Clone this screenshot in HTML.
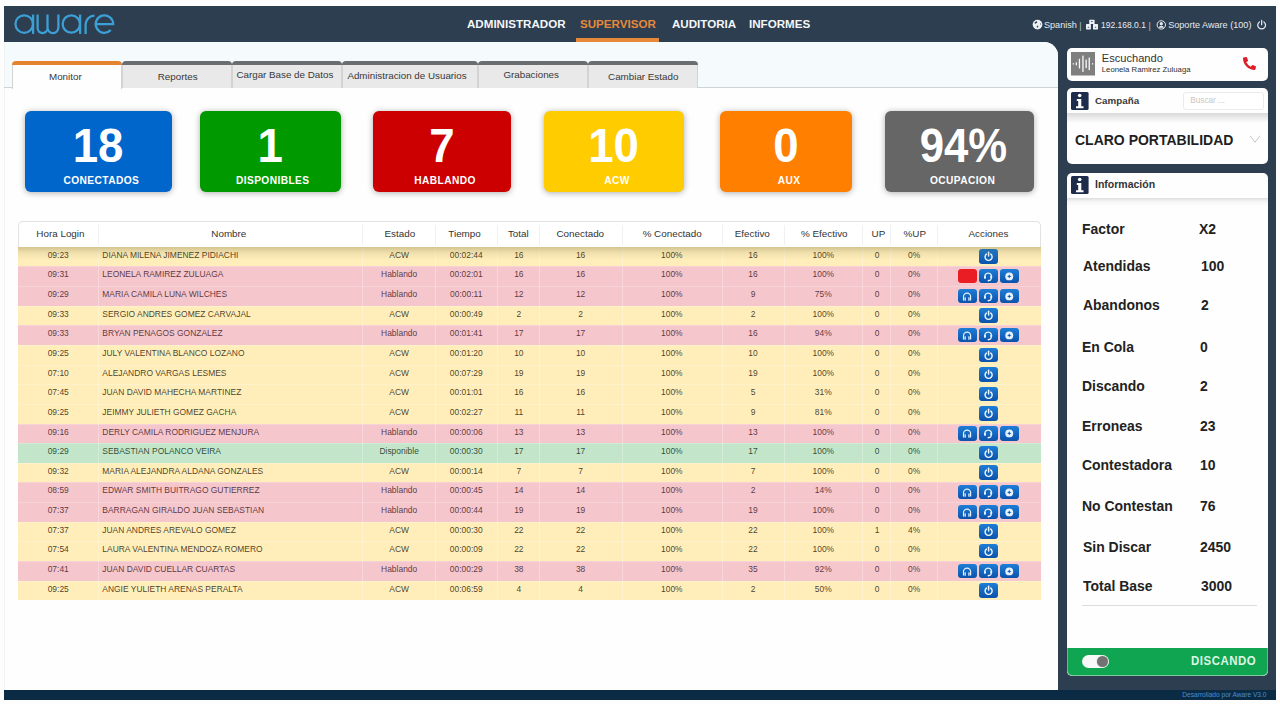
<!DOCTYPE html>
<html><head><meta charset="utf-8">
<style>
*{box-sizing:border-box;margin:0;padding:0}
html,body{width:1280px;height:704px;overflow:hidden;background:#fdfdfd;font-family:"Liberation Sans",sans-serif}
.abs{position:absolute}
#hdr{position:absolute;left:4px;top:6px;width:1272px;height:36px;background:#2d3e50}
#nav a{position:absolute;top:10.5px;font-size:11.6px;font-weight:bold;color:#f4f6f8;text-decoration:none;white-space:nowrap;line-height:14px}
#nav a.on{color:#e8893a}
#navline{position:absolute;left:572px;top:32px;width:83px;height:4px;background:#e8893a}
#hinfo{position:absolute;top:15px;left:1028px;font-size:9px;color:#e3e8ee;white-space:nowrap;line-height:10px}
#main{position:absolute;left:4px;top:42px;width:1054px;height:648px;background:#fefefe;border-top-right-radius:14px;overflow:hidden}
#mtop{position:absolute;left:0;top:0;width:1054px;height:45px;background:#f5fafd}
#tabline{position:absolute;left:0;top:45px;width:1054px;height:1px;background:#ccd3d9}
#leftline{position:absolute;left:0;top:0;width:1px;height:648px;background:#f1f2f4}
.tab{position:absolute;top:19px;height:27px;background:#e9e9e9;border-left:1px solid #d3d3d3;border-right:1px solid #d3d3d3;border-top-left-radius:5px;border-top-right-radius:5px;font-size:9.8px;color:#333;text-align:center;line-height:22px;padding-top:4px;white-space:nowrap}
.tab:before{content:"";position:absolute;left:-1px;right:-1px;top:0;height:4px;background:#6b6e71;border-top-left-radius:5px;border-top-right-radius:5px}
.tab.on{background:#fefefe;height:28px}
.tab.on:before{background:#e58430}
.card{position:absolute;top:68.6px;height:81px;border-radius:6px;box-shadow:0 1px 6px rgba(0,0,0,.32);color:#fff;text-align:center}
.card .n{position:absolute;left:0;right:0;top:13px;font-size:48px;font-weight:bold;line-height:44px;transform:scaleX(.95)}
.card .l{position:absolute;left:5.8px;right:0;top:63.1px;font-size:11.2px;font-weight:bold;line-height:12px;letter-spacing:.45px;transform:scaleX(.91)}
#tbl{position:absolute;left:13.5px;top:179px;width:1023.8px;height:380px}
#th{position:absolute;left:0;top:0;width:1023.8px;height:25.8px;background:#fff;border:1px solid #e2e2e2;border-bottom:none;border-top-left-radius:5px;border-top-right-radius:5px}
.thc{position:absolute;top:7.2px;line-height:1;font-size:9.85px;color:#333;text-align:center;white-space:nowrap}
.thd{position:absolute;top:3px;width:1px;height:20px;background:#f1f1f1}
.tr{position:absolute;left:0;width:1023.8px;height:19.64px}
.tr+.tr:before{content:"";position:absolute;left:0;top:0;width:100%;height:1px;background:rgba(255,255,255,.22)}
.tr div{position:absolute;top:0;height:19.66px;line-height:16.8px;font-size:9.6px;text-align:center;white-space:nowrap;color:rgba(25,15,0,.8);transform:scaleX(.88)}
.tr .c1{text-align:left;padding-left:4.9px;transform-origin:left}
.tr.y{background:#ffeeba}
.tr.k{background:#f5c6cb}
.tr.k div{color:rgba(40,5,15,.76)}
.tr.g{background:#c3e6cb}
.tr.g div{color:rgba(0,25,10,.78)}
.tr .c11{transform:none;font-size:0;padding-left:0;text-align:center;line-height:0}
.vd{position:absolute;top:25.8px;width:1px;height:353.5px;background:rgba(255,255,255,.28)}
.ish{position:absolute;left:0;top:25.8px;width:1023.8px;height:13px;background:linear-gradient(rgba(70,60,10,.24),rgba(70,60,10,.08) 45%,rgba(70,60,10,0))}
.b{display:inline-block;width:19px;height:14.5px;border-radius:3px;background:linear-gradient(#1d7ed6,#0c52ab);vertical-align:top;margin-top:2.5px;position:relative;left:-0.6px;box-shadow:0 0 1px rgba(255,255,255,.8)}
.b+.b{margin-left:2.3px}
.b.rd{background:#ea1c24}
.b svg{position:absolute;left:0;top:0;width:19px;height:14.5px}
#side{position:absolute;left:1058px;top:42px;width:218px;height:648px;background:#2d3e50}
#foot{position:absolute;left:4px;top:690px;width:1272px;height:10px;background:#0b2b45}
#foot span{position:absolute;right:9.5px;top:-0.5px;font-size:6.6px;line-height:9px;color:#4a8ed0}
.t{position:absolute;line-height:1;white-space:nowrap}
.sc2{position:absolute;background:#fefefe;border-radius:5px}
.sc{position:absolute;left:9px;width:201px;background:#fefefe;border-radius:6px}
.ico{position:absolute;background:#2d3e50}
.lbl{position:absolute;left:16px;font-size:14px;font-weight:bold;color:#222;line-height:14px;white-space:nowrap}
.val{position:absolute;left:133px;font-size:14px;font-weight:bold;color:#222;line-height:14px;white-space:nowrap}
.c0{left:0.0px;width:80.5px}
.c1{left:80.5px;width:264.7px}
.c2{left:345.2px;width:72.3px}
.c3{left:417.5px;width:62.5px}
.c4{left:480.0px;width:41.7px}
.c5{left:521.7px;width:83.2px}
.c6{left:604.9px;width:99.6px}
.c7{left:704.5px;width:62.0px}
.c8{left:766.5px;width:78.6px}
.c9{left:845.1px;width:28.1px}
.c10{left:873.2px;width:46.3px}
.c11{left:919.5px;width:104.3px}
</style></head><body>
<svg width="0" height="0" style="position:absolute"><defs>
<symbol id="pw" viewBox="0 0 19 14.5"><path d="M7.45 5.1 A3.5 3.5 0 1 0 11.75 5.1" fill="none" stroke="#eef6ff" stroke-width="1.45" stroke-linecap="round"/><line x1="9.6" y1="3.3" x2="9.6" y2="7.1" stroke="#eef6ff" stroke-width="1.45" stroke-linecap="round"/></symbol>
<symbol id="hs" viewBox="0 0 19 14.5"><path d="M6.2 9.2 A3.4 3.4 0 1 1 12.1 9.2" fill="none" stroke="#e6f3ff" stroke-width="1.35"/><rect x="5.2" y="6.9" width="1.7" height="2.9" rx=".6" fill="#e6f3ff"/><rect x="11.3" y="6.9" width="1.7" height="2.9" rx=".6" fill="#e6f3ff"/><path d="M12.2 9.6 Q12.2 11.6 9.6 11.6" fill="none" stroke="#e6f3ff" stroke-width="1.1"/><circle cx="9.4" cy="11.6" r=".85" fill="#e6f3ff"/></symbol>
<symbol id="hp" viewBox="0 0 19 14.5"><path d="M5.5 11.6 V7.6 A3.55 3.55 0 0 1 12.6 7.6 V11.6" fill="none" stroke="#e6f3ff" stroke-width="1.15"/><rect x="6.5" y="8.3" width="1.3" height="3.5" rx=".5" fill="#e6f3ff"/><rect x="10.3" y="8.3" width="1.3" height="3.5" rx=".5" fill="#e6f3ff"/></symbol>
<symbol id="pl" viewBox="0 0 19 14.5"><circle cx="9.25" cy="7.4" r="3.95" fill="#e6f3ff"/><path d="M9.25 5.2 L9.9 6.75 L11.45 7.4 L9.9 8.05 L9.25 9.6 L8.6 8.05 L7.05 7.4 L8.6 6.75Z" fill="#0d56ad"/></symbol>
</defs></svg>
<div id="hdr">
  <svg class="abs" style="left:0;top:0" width="120" height="36" viewBox="4 6 120 36">
   <g fill="none" stroke="#3ca0d6" stroke-width="2.25" stroke-linecap="butt">
    <circle cx="24.2" cy="24" r="8.75"/><line x1="33.1" y1="14.6" x2="33.1" y2="33.9"/>
    <path d="M37.6 14.6 V28.1 a4.95 4.95 0 0 0 9.9 0 V14.6 M47.5 27.6 a5.45 5.45 0 0 0 10.9 0 V14.6"/>
    <circle cx="71.3" cy="24" r="8.65"/><line x1="80.1" y1="14.6" x2="80.1" y2="33.9"/>
    <path d="M85.6 33.9 V24 a8.8 8.8 0 0 1 8.9 -8.3"/>
    <path d="M95.8 24 H113.2 a8.75 8.75 0 1 0 -2.4 6.1"/>
   </g>
  </svg>
  <div id="nav">
   <a style="left:463px">ADMINISTRADOR</a>
   <a class="on" style="left:576px">SUPERVISOR</a>
   <a style="left:668px">AUDITORIA</a>
   <a style="left:745px">INFORMES</a>
  </div>
  <div id="navline"></div>

</div>
<div class="abs" style="left:1030px;top:40px;width:30px;height:30px;background:#2d3e50"></div>
<div id="main">
  <div id="mtop"></div>
  <div id="leftline"></div>
  <div id="tabline"></div>
  <div class="tab on" style="left:8px;width:110px"></div>
  <div class="tab" style="left:118px;width:110px"></div>
  <div class="tab" style="left:228px;width:110px"></div>
  <div class="tab" style="left:338px;width:136px"></div>
  <div class="tab" style="left:474px;width:110px"></div>
  <div class="tab" style="left:584px;width:110px"></div>

  <div class="card" style="left:21.3px;width:146.5px;background:#0066cc"><div class="n" style="left:-1.7px">18</div><div class="l">CONECTADOS</div></div>
  <div class="card" style="left:195.6px;width:141.2px;background:#009900"><div class="n" style="left:-1px">1</div><div class="l">DISPONIBLES</div></div>
  <div class="card" style="left:369px;width:138px;background:#cc0000"><div class="n">7</div><div class="l">HABLANDO</div></div>
  <div class="card" style="left:540px;width:140px;background:#ffcc00"><div class="n" style="left:-1px">10</div><div class="l">ACW</div></div>
  <div class="card" style="left:716px;width:132px;background:#ff8000"><div class="n">0</div><div class="l">AUX</div></div>
  <div class="card" style="left:881px;width:149px;background:#666666"><div class="n" style="left:8.3px;transform:scaleX(.91)">94%</div><div class="l">OCUPACION</div></div>

  <div id="tbl">
   <div id="th">
<div class="thc" style="left:1.70px;width:80.50px">Hora Login</div>
<div class="thc" style="left:78.00px;width:264.70px">Nombre</div>
<div class="thd" style="left:79.00px"></div>
<div class="thc" style="left:345.20px;width:72.30px">Estado</div>
<div class="thd" style="left:343.70px"></div>
<div class="thc" style="left:414.80px;width:62.50px">Tiempo</div>
<div class="thd" style="left:416.00px"></div>
<div class="thc" style="left:479.00px;width:41.70px">Total</div>
<div class="thd" style="left:478.50px"></div>
<div class="thc" style="left:520.20px;width:83.20px">Conectado</div>
<div class="thd" style="left:520.20px"></div>
<div class="thc" style="left:603.90px;width:99.60px">% Conectado</div>
<div class="thd" style="left:603.40px"></div>
<div class="thc" style="left:702.80px;width:62.00px">Efectivo</div>
<div class="thd" style="left:703.00px"></div>
<div class="thc" style="left:766.50px;width:78.60px">% Efectivo</div>
<div class="thd" style="left:765.00px"></div>
<div class="thc" style="left:845.90px;width:28.10px">UP</div>
<div class="thd" style="left:843.60px"></div>
<div class="thc" style="left:873.20px;width:46.30px">%UP</div>
<div class="thd" style="left:871.70px"></div>
<div class="thc" style="left:917.80px;width:104.30px">Acciones</div>
<div class="thd" style="left:918.00px"></div>
</div>
   <div class="tr y" style="top:25.80px"><div class="c0">09:23</div><div class="c1">DIANA MILENA JIMENEZ PIDIACHI</div><div class="c2">ACW</div><div class="c3">00:02:44</div><div class="c4">16</div><div class="c5">16</div><div class="c6">100%</div><div class="c7">16</div><div class="c8">100%</div><div class="c9">0</div><div class="c10">0%</div><div class="c11"><i class="b"><svg><use href="#pw"/></svg></i></div></div>
<div class="tr k" style="top:45.44px"><div class="c0">09:31</div><div class="c1">LEONELA RAMIREZ ZULUAGA</div><div class="c2">Hablando</div><div class="c3">00:02:01</div><div class="c4">16</div><div class="c5">16</div><div class="c6">100%</div><div class="c7">16</div><div class="c8">100%</div><div class="c9">0</div><div class="c10">0%</div><div class="c11"><i class="b rd"></i><i class="b"><svg><use href="#hs"/></svg></i><i class="b"><svg><use href="#pl"/></svg></i></div></div>
<div class="tr k" style="top:65.08px"><div class="c0">09:29</div><div class="c1">MARIA CAMILA LUNA WILCHES</div><div class="c2">Hablando</div><div class="c3">00:00:11</div><div class="c4">12</div><div class="c5">12</div><div class="c6">100%</div><div class="c7">9</div><div class="c8">75%</div><div class="c9">0</div><div class="c10">0%</div><div class="c11"><i class="b"><svg><use href="#hp"/></svg></i><i class="b"><svg><use href="#hs"/></svg></i><i class="b"><svg><use href="#pl"/></svg></i></div></div>
<div class="tr y" style="top:84.72px"><div class="c0">09:33</div><div class="c1">SERGIO ANDRES GOMEZ CARVAJAL</div><div class="c2">ACW</div><div class="c3">00:00:49</div><div class="c4">2</div><div class="c5">2</div><div class="c6">100%</div><div class="c7">2</div><div class="c8">100%</div><div class="c9">0</div><div class="c10">0%</div><div class="c11"><i class="b"><svg><use href="#pw"/></svg></i></div></div>
<div class="tr k" style="top:104.36px"><div class="c0">09:33</div><div class="c1">BRYAN PENAGOS GONZALEZ</div><div class="c2">Hablando</div><div class="c3">00:01:41</div><div class="c4">17</div><div class="c5">17</div><div class="c6">100%</div><div class="c7">16</div><div class="c8">94%</div><div class="c9">0</div><div class="c10">0%</div><div class="c11"><i class="b"><svg><use href="#hp"/></svg></i><i class="b"><svg><use href="#hs"/></svg></i><i class="b"><svg><use href="#pl"/></svg></i></div></div>
<div class="tr y" style="top:124.00px"><div class="c0">09:25</div><div class="c1">JULY VALENTINA BLANCO LOZANO</div><div class="c2">ACW</div><div class="c3">00:01:20</div><div class="c4">10</div><div class="c5">10</div><div class="c6">100%</div><div class="c7">10</div><div class="c8">100%</div><div class="c9">0</div><div class="c10">0%</div><div class="c11"><i class="b"><svg><use href="#pw"/></svg></i></div></div>
<div class="tr y" style="top:143.64px"><div class="c0">07:10</div><div class="c1">ALEJANDRO VARGAS LESMES</div><div class="c2">ACW</div><div class="c3">00:07:29</div><div class="c4">19</div><div class="c5">19</div><div class="c6">100%</div><div class="c7">19</div><div class="c8">100%</div><div class="c9">0</div><div class="c10">0%</div><div class="c11"><i class="b"><svg><use href="#pw"/></svg></i></div></div>
<div class="tr y" style="top:163.28px"><div class="c0">07:45</div><div class="c1">JUAN DAVID MAHECHA MARTINEZ</div><div class="c2">ACW</div><div class="c3">00:01:01</div><div class="c4">16</div><div class="c5">16</div><div class="c6">100%</div><div class="c7">5</div><div class="c8">31%</div><div class="c9">0</div><div class="c10">0%</div><div class="c11"><i class="b"><svg><use href="#pw"/></svg></i></div></div>
<div class="tr y" style="top:182.92px"><div class="c0">09:25</div><div class="c1">JEIMMY JULIETH GOMEZ GACHA</div><div class="c2">ACW</div><div class="c3">00:02:27</div><div class="c4">11</div><div class="c5">11</div><div class="c6">100%</div><div class="c7">9</div><div class="c8">81%</div><div class="c9">0</div><div class="c10">0%</div><div class="c11"><i class="b"><svg><use href="#pw"/></svg></i></div></div>
<div class="tr k" style="top:202.56px"><div class="c0">09:16</div><div class="c1">DERLY CAMILA RODRIGUEZ MENJURA</div><div class="c2">Hablando</div><div class="c3">00:00:06</div><div class="c4">13</div><div class="c5">13</div><div class="c6">100%</div><div class="c7">13</div><div class="c8">100%</div><div class="c9">0</div><div class="c10">0%</div><div class="c11"><i class="b"><svg><use href="#hp"/></svg></i><i class="b"><svg><use href="#hs"/></svg></i><i class="b"><svg><use href="#pl"/></svg></i></div></div>
<div class="tr g" style="top:222.20px"><div class="c0">09:29</div><div class="c1">SEBASTIAN POLANCO VEIRA</div><div class="c2">Disponible</div><div class="c3">00:00:30</div><div class="c4">17</div><div class="c5">17</div><div class="c6">100%</div><div class="c7">17</div><div class="c8">100%</div><div class="c9">0</div><div class="c10">0%</div><div class="c11"><i class="b"><svg><use href="#pw"/></svg></i></div></div>
<div class="tr y" style="top:241.84px"><div class="c0">09:32</div><div class="c1">MARIA ALEJANDRA ALDANA GONZALES</div><div class="c2">ACW</div><div class="c3">00:00:14</div><div class="c4">7</div><div class="c5">7</div><div class="c6">100%</div><div class="c7">7</div><div class="c8">100%</div><div class="c9">0</div><div class="c10">0%</div><div class="c11"><i class="b"><svg><use href="#pw"/></svg></i></div></div>
<div class="tr k" style="top:261.48px"><div class="c0">08:59</div><div class="c1">EDWAR SMITH BUITRAGO GUTIERREZ</div><div class="c2">Hablando</div><div class="c3">00:00:45</div><div class="c4">14</div><div class="c5">14</div><div class="c6">100%</div><div class="c7">2</div><div class="c8">14%</div><div class="c9">0</div><div class="c10">0%</div><div class="c11"><i class="b"><svg><use href="#hp"/></svg></i><i class="b"><svg><use href="#hs"/></svg></i><i class="b"><svg><use href="#pl"/></svg></i></div></div>
<div class="tr k" style="top:281.12px"><div class="c0">07:37</div><div class="c1">BARRAGAN GIRALDO JUAN SEBASTIAN</div><div class="c2">Hablando</div><div class="c3">00:00:44</div><div class="c4">19</div><div class="c5">19</div><div class="c6">100%</div><div class="c7">19</div><div class="c8">100%</div><div class="c9">0</div><div class="c10">0%</div><div class="c11"><i class="b"><svg><use href="#hp"/></svg></i><i class="b"><svg><use href="#hs"/></svg></i><i class="b"><svg><use href="#pl"/></svg></i></div></div>
<div class="tr y" style="top:300.76px"><div class="c0">07:37</div><div class="c1">JUAN ANDRES AREVALO GOMEZ</div><div class="c2">ACW</div><div class="c3">00:00:30</div><div class="c4">22</div><div class="c5">22</div><div class="c6">100%</div><div class="c7">22</div><div class="c8">100%</div><div class="c9">1</div><div class="c10">4%</div><div class="c11"><i class="b"><svg><use href="#pw"/></svg></i></div></div>
<div class="tr y" style="top:320.40px"><div class="c0">07:54</div><div class="c1">LAURA VALENTINA MENDOZA ROMERO</div><div class="c2">ACW</div><div class="c3">00:00:09</div><div class="c4">22</div><div class="c5">22</div><div class="c6">100%</div><div class="c7">22</div><div class="c8">100%</div><div class="c9">0</div><div class="c10">0%</div><div class="c11"><i class="b"><svg><use href="#pw"/></svg></i></div></div>
<div class="tr k" style="top:340.04px"><div class="c0">07:41</div><div class="c1">JUAN DAVID CUELLAR CUARTAS</div><div class="c2">Hablando</div><div class="c3">00:00:29</div><div class="c4">38</div><div class="c5">38</div><div class="c6">100%</div><div class="c7">35</div><div class="c8">92%</div><div class="c9">0</div><div class="c10">0%</div><div class="c11"><i class="b"><svg><use href="#hp"/></svg></i><i class="b"><svg><use href="#hs"/></svg></i><i class="b"><svg><use href="#pl"/></svg></i></div></div>
<div class="tr y" style="top:359.68px"><div class="c0">09:25</div><div class="c1">ANGIE YULIETH ARENAS PERALTA</div><div class="c2">ACW</div><div class="c3">00:06:59</div><div class="c4">4</div><div class="c5">4</div><div class="c6">100%</div><div class="c7">2</div><div class="c8">50%</div><div class="c9">0</div><div class="c10">0%</div><div class="c11"><i class="b"><svg><use href="#pw"/></svg></i></div></div>
<div class="vd" style="left:80.00px"></div>
<div class="vd" style="left:344.70px"></div>
<div class="vd" style="left:417.00px"></div>
<div class="vd" style="left:479.50px"></div>
<div class="vd" style="left:521.20px"></div>
<div class="vd" style="left:604.40px"></div>
<div class="vd" style="left:704.00px"></div>
<div class="vd" style="left:766.00px"></div>
<div class="vd" style="left:844.60px"></div>
<div class="vd" style="left:872.70px"></div>
<div class="vd" style="left:919.00px"></div>
<div class="ish"></div>
  </div>
</div>
<div id="side"></div>
<div class="t" style="left:49px;top:71.50px;font-size:9.8px;color:#383838">Monitor</div>
<div class="t" style="left:157.8px;top:71.70px;font-size:9.8px;color:#383838">Reportes</div>
<div class="t" style="left:236.4px;top:70.45px;font-size:9.8px;color:#383838">Cargar Base de Datos</div>
<div class="t" style="left:347.4px;top:71.40px;font-size:9.8px;color:#383838">Administracion de Usuarios</div>
<div class="t" style="left:503.4px;top:70.40px;font-size:9.8px;color:#383838">Grabaciones</div>
<div class="t" style="left:608.1px;top:71.60px;font-size:9.8px;color:#383838">Cambiar Estado</div>
<svg class="abs" style="left:1032px;top:19px" width="12" height="12" viewBox="0 0 12 12"><circle cx="5.5" cy="5.6" r="4.85" fill="#eef2f6"/><ellipse cx="3.9" cy="3.5" rx="1.5" ry="0.9" transform="rotate(-30 3.9 3.5)" fill="#2d3e50"/><ellipse cx="8.5" cy="5" rx=".6" ry="1" fill="#8a96a3"/><ellipse cx="5.5" cy="7.6" rx=".8" ry="1.1" fill="#3a4a5c"/></svg>
<div class="t" style="left:1044px;top:21.2px;font-size:9.1px;color:#e6ebf0">Spanish</div>
<div class="t" style="left:1079.2px;top:21.5px;font-size:9px;color:#b8c2cc">|</div>
<svg class="abs" style="left:1085px;top:19px" width="14" height="12" viewBox="0 0 14 12"><g fill="#eef2f6"><rect x="4.2" y="0.8" width="5.4" height="4.2" rx=".6"/><rect x="1" y="5" width="4.9" height="5.4" rx=".6"/><rect x="8" y="5" width="5" height="5.4" rx=".6"/></g><g fill="#4a5766"><rect x="5.8" y="2" width="2" height=".9" rx=".4"/><rect x="2.7" y="7.8" width="1.5" height="1" rx=".4"/><rect x="9.8" y="7.8" width="1.5" height="1" rx=".4"/></g></svg>
<div class="t" style="left:1101px;top:21.2px;font-size:9.1px;color:#e6ebf0;transform:scaleX(.935);transform-origin:left">192.168.0.1</div>
<div class="t" style="left:1148.5px;top:21.5px;font-size:9px;color:#b8c2cc">|</div>
<svg class="abs" style="left:1155.5px;top:20px" width="11" height="10" viewBox="0 0 11 10"><circle cx="5.3" cy="4.9" r="4.2" fill="none" stroke="#e8edf2" stroke-width="1"/><circle cx="5.3" cy="3.7" r="1.6" fill="#e8edf2"/><path d="M2.6 7.8 q.6-2 2.7-2 q2.1 0 2.7 2" fill="#e8edf2"/></svg>
<div class="t" style="left:1168.2px;top:21.2px;font-size:9.1px;color:#e6ebf0">Soporte Aware (100)</div>
<svg class="abs" style="left:1256px;top:19px" width="12" height="12" viewBox="0 0 12 12"><path d="M3.4 2.9 A3.9 3.9 0 1 0 7.9 2.9" fill="none" stroke="#e3e9ef" stroke-width="1.25" stroke-linecap="round"/><line x1="5.65" y1="1.4" x2="5.65" y2="5.8" stroke="#e3e9ef" stroke-width="1.25" stroke-linecap="round"/></svg>
<div class="sc2" style="left:1067px;top:48.3px;width:201px;height:32.5px"></div>
<svg class="abs" style="left:1071.4px;top:52.4px" width="24" height="24" viewBox="0 0 24 24"><rect width="24" height="23.5" fill="#7f7f7f"/><g fill="#fafafa"><rect x="1.7" y="11.2" width="1.2" height="1.3"/><rect x="4.7" y="10.4" width="1.3" height="2.9"/><rect x="7.8" y="6.8" width="1.3" height="9.6"/><rect x="11.3" y="3.6" width="1.3" height="16.3"/><rect x="14.5" y="7.6" width="1.3" height="8.5"/><rect x="17.6" y="5.6" width="1.3" height="12.5"/><rect x="21" y="11.2" width="1.2" height="1.3"/></g></svg>
<div class="t" style="left:1101.8px;top:52.60px;font-size:11.1px;color:#333">Escuchando</div>
<div class="t" style="left:1101.8px;top:65.74px;font-size:7.75px;color:#2f2f2f">Leonela Ramirez Zuluaga</div>
<svg class="abs" style="left:1242.5px;top:57px" width="13" height="13" viewBox="0 0 512 512"><path d="M497.39 361.8l-112-48a24 24 0 0 0-28 6.9l-49.6 60.6A370.66 370.66 0 0 1 130.6 204.11l60.6-49.6a23.94 23.94 0 0 0 6.9-28l-48-112A24.16 24.16 0 0 0 122.6.61l-104 24A24 24 0 0 0 0 48c0 256.5 207.9 464 464 464a24 24 0 0 0 23.4-18.6l24-104a24.290 24.290 0 0 0-14.01-27.6z" fill="#dc1f2b"/></svg>
<div class="sc2" style="left:1067px;top:88.2px;width:201px;height:76.3px;overflow:hidden"><div style="position:absolute;left:0;top:25.3px;width:201px;height:10px;background:linear-gradient(#d9d9d9,rgba(255,255,255,0))"></div></div>
<svg class="abs" style="left:1071.3px;top:91.9px" width="18" height="18" viewBox="0 0 18 18"><rect width="17.6" height="18" rx="1.5" fill="#1d2c4b"/><circle cx="8.7" cy="3.5" r="1.8" fill="#fff"/><path d="M5.8 7 H10.3 V14.3 H12.5 V16.3 H5 V14.3 H7.2 V8.9 H5.8Z" fill="#fff"/></svg>
<div class="t" style="left:1095px;top:96.45px;font-size:9.8px;color:#3a3a3a;font-weight:bold">Campaña</div>
<div class="abs" style="left:1182.6px;top:92.25px;width:81px;height:18px;border:1px solid #ebebeb;border-radius:3px;background:#fff"></div>
<div class="t" style="left:1190.3px;top:96.66px;font-size:8.2px;color:#c6c6c6">Buscar ...</div>
<div class="t" style="left:1075px;top:132.30px;font-size:15px;color:#1f1f1f;font-weight:bold;transform:scaleX(.933);transform-origin:left">CLARO PORTABILIDAD</div>
<svg class="abs" style="left:1249px;top:134px" width="12" height="10" viewBox="0 0 12 10"><path d="M1 1.8 L6 8.2 L11 1.8" fill="none" stroke="#c6c6c6" stroke-width="1"/></svg>
<div class="sc2" style="left:1067px;top:173px;width:201px;height:503px;overflow:hidden"><div style="position:absolute;left:0;top:25px;width:201px;height:8px;background:linear-gradient(rgba(0,0,0,.13),rgba(0,0,0,.04) 40%,rgba(0,0,0,0))"></div><div style="position:absolute;left:0;top:474.8px;width:201px;height:28.2px;background:#10a551;border-radius:0 0 5px 5px;box-shadow:inset 0 -1px 0 rgba(255,255,255,.45),inset 1px 0 0 rgba(255,255,255,.3),inset -1px 0 0 rgba(255,255,255,.3)"></div></div>
<svg class="abs" style="left:1071.3px;top:176.4px" width="18" height="18" viewBox="0 0 18 18"><rect width="17.6" height="18" rx="1.5" fill="#1d2c4b"/><circle cx="8.7" cy="3.5" r="1.8" fill="#fff"/><path d="M5.8 7 H10.3 V14.3 H12.5 V16.3 H5 V14.3 H7.2 V8.9 H5.8Z" fill="#fff"/></svg>
<div class="t" style="left:1095px;top:179.31px;font-size:10.5px;color:#333;font-weight:bold">Información</div>
<div class="t" style="left:1081.6px;top:221.30px;font-size:15px;color:#222;font-weight:bold;transform:scaleX(.93);transform-origin:left">Factor</div>
<div class="t" style="left:1199.3px;top:221.30px;font-size:15px;color:#222;font-weight:bold;transform:scaleX(.93);transform-origin:left">X2</div>
<div class="t" style="left:1083.3px;top:257.70px;font-size:15px;color:#222;font-weight:bold;transform:scaleX(.93);transform-origin:left">Atendidas</div>
<div class="t" style="left:1200.9px;top:257.70px;font-size:15px;color:#222;font-weight:bold;transform:scaleX(.93);transform-origin:left">100</div>
<div class="t" style="left:1083.3px;top:297.30px;font-size:15px;color:#222;font-weight:bold;transform:scaleX(.93);transform-origin:left">Abandonos</div>
<div class="t" style="left:1200.9px;top:297.30px;font-size:15px;color:#222;font-weight:bold;transform:scaleX(.93);transform-origin:left">2</div>
<div class="t" style="left:1081.6px;top:339.10px;font-size:15px;color:#222;font-weight:bold;transform:scaleX(.93);transform-origin:left">En Cola</div>
<div class="t" style="left:1199.7px;top:339.10px;font-size:15px;color:#222;font-weight:bold;transform:scaleX(.93);transform-origin:left">0</div>
<div class="t" style="left:1081.6px;top:378.30px;font-size:15px;color:#222;font-weight:bold;transform:scaleX(.93);transform-origin:left">Discando</div>
<div class="t" style="left:1200.2px;top:378.30px;font-size:15px;color:#222;font-weight:bold;transform:scaleX(.93);transform-origin:left">2</div>
<div class="t" style="left:1081.6px;top:418.30px;font-size:15px;color:#222;font-weight:bold;transform:scaleX(.93);transform-origin:left">Erroneas</div>
<div class="t" style="left:1199.7px;top:418.30px;font-size:15px;color:#222;font-weight:bold;transform:scaleX(.93);transform-origin:left">23</div>
<div class="t" style="left:1081.6px;top:457.10px;font-size:15px;color:#222;font-weight:bold;transform:scaleX(.93);transform-origin:left">Contestadora</div>
<div class="t" style="left:1199.9px;top:457.10px;font-size:15px;color:#222;font-weight:bold;transform:scaleX(.93);transform-origin:left">10</div>
<div class="t" style="left:1081.6px;top:498.4px;font-size:15px;color:#222;font-weight:bold;transform:scaleX(.93);transform-origin:left">No Contestan</div>
<div class="t" style="left:1199.7px;top:498.4px;font-size:15px;color:#222;font-weight:bold;transform:scaleX(.93);transform-origin:left">76</div>
<div class="t" style="left:1082.8px;top:538.50px;font-size:15px;color:#222;font-weight:bold;transform:scaleX(.93);transform-origin:left">Sin Discar</div>
<div class="t" style="left:1200.2px;top:538.50px;font-size:15px;color:#222;font-weight:bold;transform:scaleX(.93);transform-origin:left">2450</div>
<div class="t" style="left:1083.3px;top:577.70px;font-size:15px;color:#222;font-weight:bold;transform:scaleX(.93);transform-origin:left">Total Base</div>
<div class="t" style="left:1200.7px;top:577.70px;font-size:15px;color:#222;font-weight:bold;transform:scaleX(.93);transform-origin:left">3000</div>
<div class="abs" style="left:1082px;top:604.5px;width:174.5px;height:1px;background:#dcdcdc"></div>
<div class="abs" style="left:1081.6px;top:655px;width:27.4px;height:13.2px;border-radius:7px;background:#f8f8f8"></div>
<div class="abs" style="left:1096.7px;top:655.9px;width:11.4px;height:11.4px;border-radius:50%;background:#727272;box-shadow:0 0 0 .6px #ddd"></div>
<div class="t" style="left:1191px;top:654.1px;font-size:13px;color:#dcf6e3;font-weight:bold;letter-spacing:.6px;transform:scaleX(.88);transform-origin:left">DISCANDO</div>
<div id="foot"><span>Desarrollado por Aware V3.0</span></div>
</body></html>
